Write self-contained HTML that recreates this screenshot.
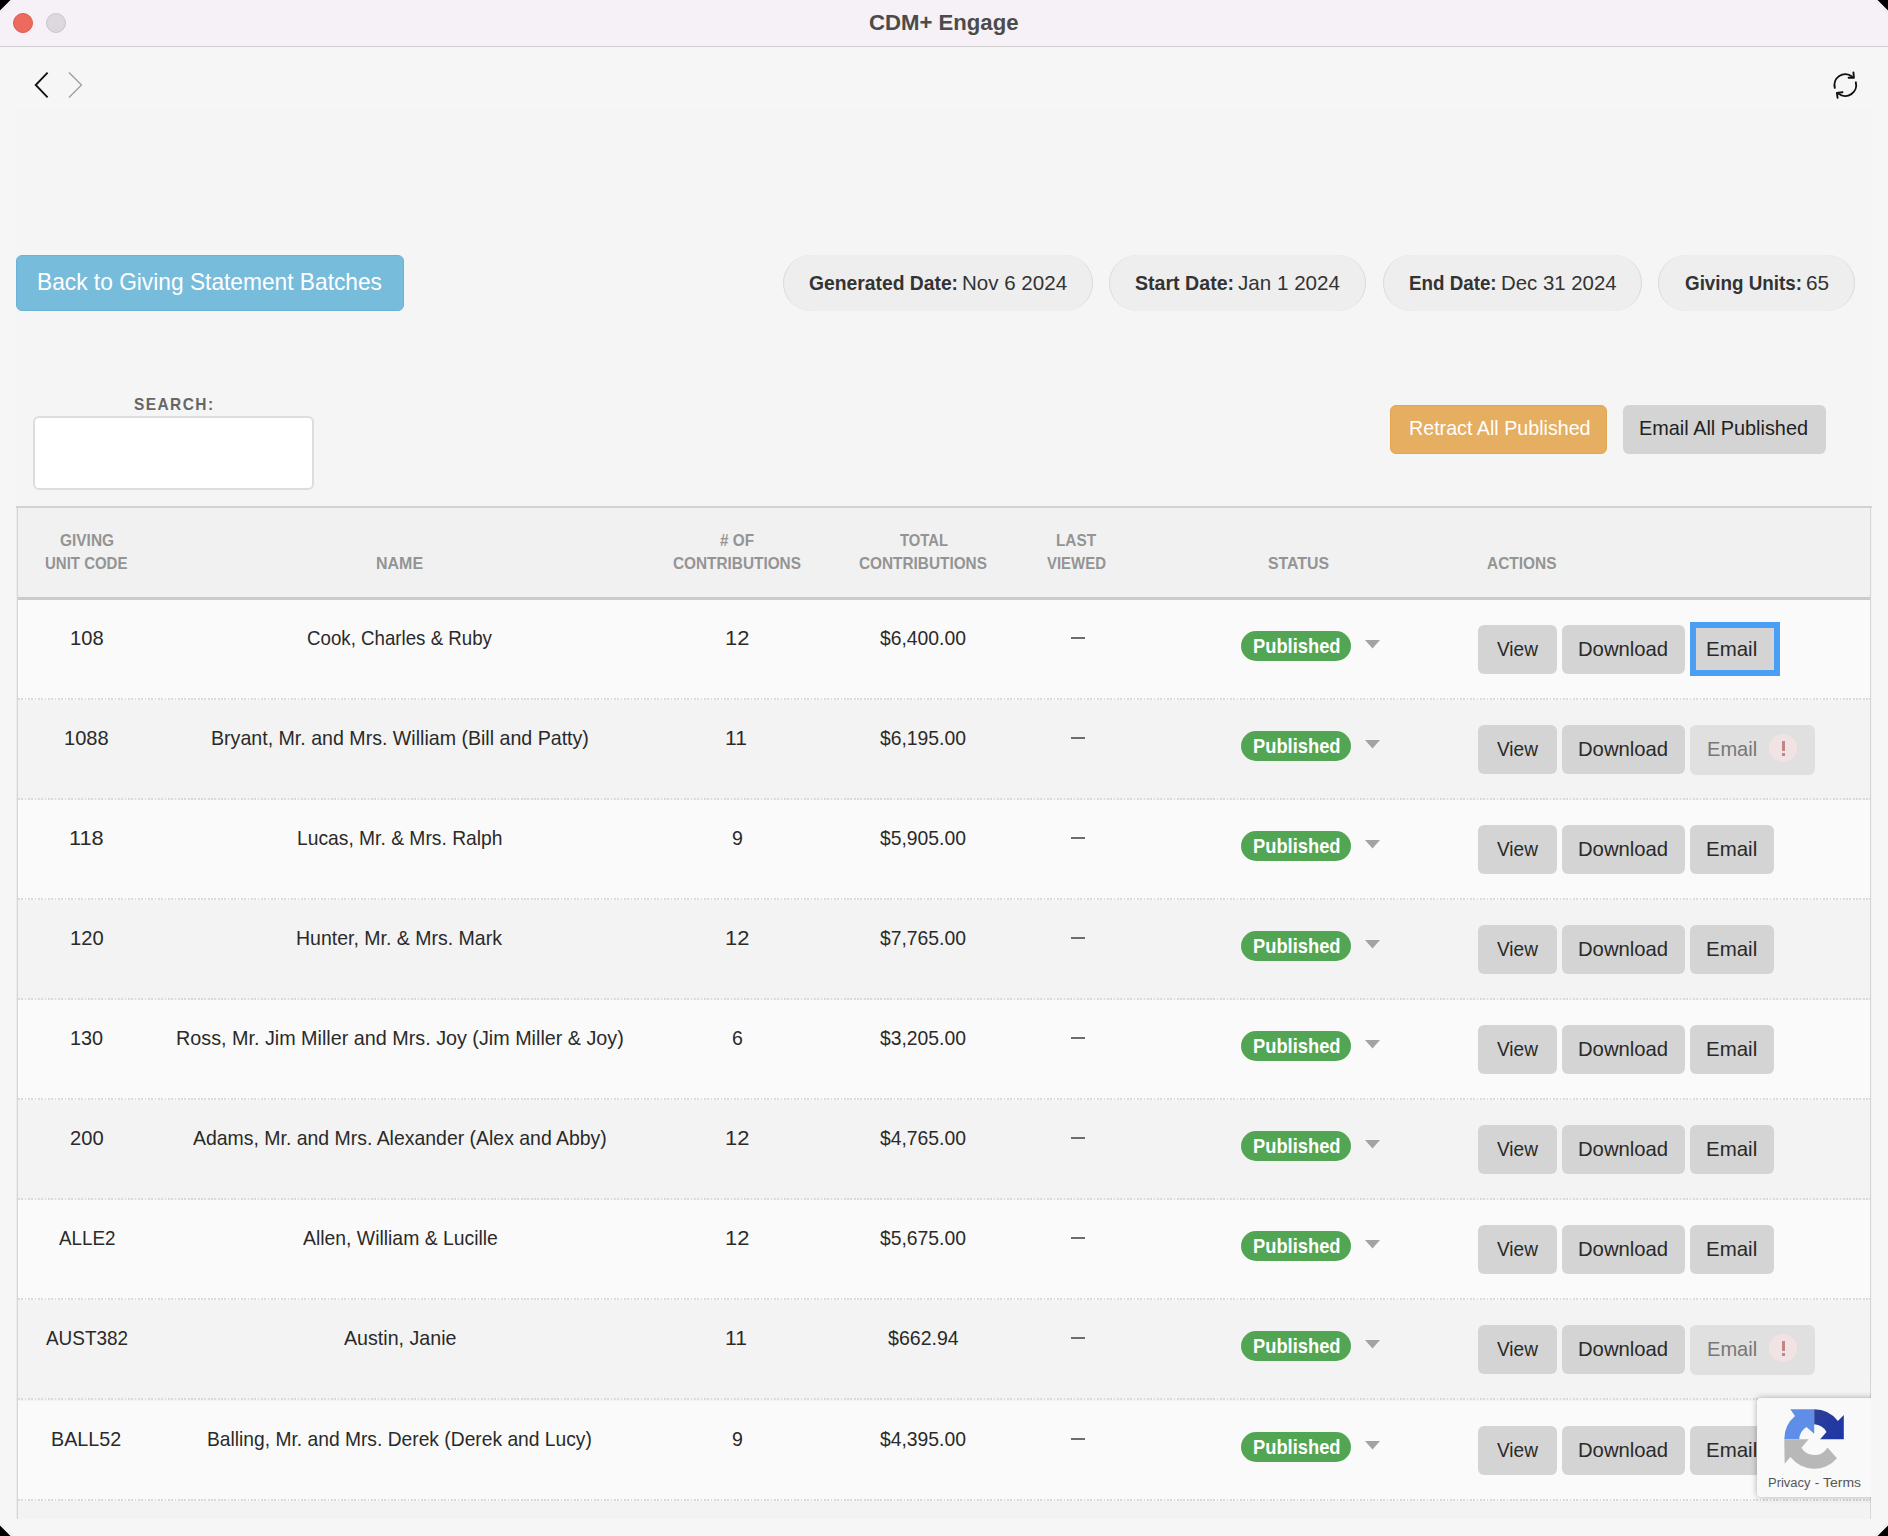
<!DOCTYPE html>
<html><head><meta charset="utf-8"><style>
html,body{margin:0;padding:0;width:1888px;height:1536px;overflow:hidden;background:#000}
body{position:relative;font-family:"Liberation Sans",sans-serif}
.b{position:absolute}
.t{position:absolute;white-space:nowrap;transform-origin:0 0}
</style></head><body>
<div class="b" style="left:0;top:0;width:1888px;height:1536px;background:#f6f6f6;overflow:hidden"><div class="b" style="left:16px;top:108px;width:1856px;height:1411px;background:#f5f5f5"></div><div class="b" style="left:0px;top:0px;width:1888px;height:46px;background:#f6f1f6"></div><div class="b" style="left:0px;top:46px;width:1888px;height:1px;background:#cfcdd0"></div></div><div class="b" style="left:13px;top:13px;width:20px;height:20px;background:#ec6a5e;border-radius:50%;border:1px solid #e0584c;box-sizing:border-box"></div><div class="b" style="left:45.5px;top:13px;width:20.0px;height:20px;background:#dcd8dd;border-radius:50%;border:1px solid #c9c5ca;box-sizing:border-box"></div><div class="t" style="left:869.00px;top:11.95px;font-size:21.8px;line-height:21.8px;color:#4b4b4b;font-weight:700;letter-spacing:0px;transform:scaleX(1.0161);">CDM+ Engage</div><svg class="b" style="left:30px;top:68px" width="60" height="34" viewBox="0 0 60 34"><polyline points="17.6,4.6 5.7,17 17.6,29.4" fill="none" stroke="#111" stroke-width="1.85"/><polyline points="39,4.5 51.5,17 39,29.5" fill="none" stroke="#9a9a9a" stroke-width="1.2"/></svg><svg class="b" style="left:1829px;top:69px" width="32" height="32" viewBox="0 0 32 32" fill="none" stroke="#111" stroke-width="1.9" stroke-linecap="round" stroke-linejoin="round">
<path d="M5.8 18.9 A10.9 10.9 0 0 1 22.9 7.4"/><path d="M19.6 8.7 L24.9 8.7 L24.4 3.4"/>
<path d="M26.8 13.3 A10.9 10.9 0 0 1 9.7 24.8"/><path d="M13.5 23.2 L7.9 23.9 L8.6 28.8"/>
</svg><div class="b" style="left:16px;top:255px;width:388px;height:56px;background:#78bcdc;border:1px solid #68b3d7;border-radius:6px;box-sizing:border-box"></div><div class="t" style="left:37.00px;top:270.38px;font-size:24px;line-height:24px;color:#ffffff;font-weight:400;letter-spacing:0px;transform:scaleX(0.9473);">Back to Giving Statement Batches</div><div class="b" style="left:783px;top:255px;width:310px;height:56px;background:#eeeeee;border-left:1.5px solid #d9d9d9;border-right:1.5px solid #d9d9d9;border-radius:28px;box-sizing:border-box"></div><div class="t" style="left:808.50px;top:272.42px;font-size:21px;line-height:21px;color:#333;font-weight:700;letter-spacing:0px;transform:scaleX(0.9188);">Generated Date:</div><div class="t" style="left:961.50px;top:272.42px;font-size:21px;line-height:21px;color:#333;font-weight:400;letter-spacing:0px;transform:scaleX(0.9781);">Nov 6 2024</div><div class="b" style="left:1109px;top:255px;width:257px;height:56px;background:#eeeeee;border-left:1.5px solid #d9d9d9;border-right:1.5px solid #d9d9d9;border-radius:28px;box-sizing:border-box"></div><div class="t" style="left:1134.50px;top:272.42px;font-size:21px;line-height:21px;color:#333;font-weight:700;letter-spacing:0px;transform:scaleX(0.9330);">Start Date:</div><div class="t" style="left:1237.50px;top:272.42px;font-size:21px;line-height:21px;color:#333;font-weight:400;letter-spacing:0px;transform:scaleX(0.9815);">Jan 1 2024</div><div class="b" style="left:1383px;top:255px;width:259px;height:56px;background:#eeeeee;border-left:1.5px solid #d9d9d9;border-right:1.5px solid #d9d9d9;border-radius:28px;box-sizing:border-box"></div><div class="t" style="left:1409.00px;top:272.42px;font-size:21px;line-height:21px;color:#333;font-weight:700;letter-spacing:0px;transform:scaleX(0.8937);">End Date:</div><div class="t" style="left:1501.00px;top:272.42px;font-size:21px;line-height:21px;color:#333;font-weight:400;letter-spacing:0px;transform:scaleX(0.9706);">Dec 31 2024</div><div class="b" style="left:1658px;top:255px;width:197px;height:56px;background:#eeeeee;border-left:1.5px solid #d9d9d9;border-right:1.5px solid #d9d9d9;border-radius:28px;box-sizing:border-box"></div><div class="t" style="left:1684.50px;top:272.42px;font-size:21px;line-height:21px;color:#333;font-weight:700;letter-spacing:0px;transform:scaleX(0.8958);">Giving Units:</div><div class="t" style="left:1806.00px;top:272.42px;font-size:21px;line-height:21px;color:#333;font-weight:400;letter-spacing:0px;transform:scaleX(0.9900);">65</div><div class="t" style="left:134.00px;top:396.41px;font-size:17.0px;line-height:17.0px;color:#666;font-weight:700;letter-spacing:1.6px;transform:scaleX(0.9087);">SEARCH:</div><div class="b" style="left:33px;top:416px;width:281px;height:74px;background:#fff;border:2px solid #dddddd;border-radius:6px;box-sizing:border-box"></div><div class="b" style="left:1390px;top:405px;width:217px;height:49px;background:#e5ae60;border:1px solid #e0a651;border-radius:6px;box-sizing:border-box"></div><div class="t" style="left:1408.50px;top:417.42px;font-size:21px;line-height:21px;color:#fff;font-weight:400;letter-spacing:0px;transform:scaleX(0.9369);">Retract All Published</div><div class="b" style="left:1623px;top:405px;width:203px;height:49px;background:#d4d4d4;border-radius:6px"></div><div class="t" style="left:1639.00px;top:417.42px;font-size:21px;line-height:21px;color:#222;font-weight:400;letter-spacing:0px;transform:scaleX(0.9465);">Email All Published</div><div class="b" style="left:16px;top:506px;width:1856px;height:2px;background:#d2d2d2"></div><div class="b" style="left:16px;top:508px;width:2px;height:1011px;background:linear-gradient(90deg,#ececec 0,#ececec 50%,#d6d6d6 50%)"></div><div class="b" style="left:1870px;top:508px;width:2px;height:1011px;background:linear-gradient(90deg,#d6d6d6 0,#d6d6d6 50%,#f2f2f2 50%)"></div><div class="b" style="left:18px;top:508px;width:1852px;height:1011px;background:#f3f3f3"></div><div class="b" style="left:18px;top:508px;width:1852px;height:89px;background:#f1f1f1"></div><div class="b" style="left:18px;top:597px;width:1852px;height:3px;background:#cbcbcb"></div><div class="t" style="left:59.50px;top:531.56px;font-size:17.3px;line-height:17.3px;color:#949494;font-weight:700;letter-spacing:0px;transform:scaleX(0.8933);">GIVING</div><div class="t" style="left:45.00px;top:554.56px;font-size:17.3px;line-height:17.3px;color:#949494;font-weight:700;letter-spacing:0px;transform:scaleX(0.8673);">UNIT CODE</div><div class="t" style="left:376.00px;top:554.56px;font-size:17.3px;line-height:17.3px;color:#949494;font-weight:700;letter-spacing:0px;transform:scaleX(0.9243);">NAME</div><div class="t" style="left:720.00px;top:531.56px;font-size:17.3px;line-height:17.3px;color:#949494;font-weight:700;letter-spacing:0px;transform:scaleX(0.8843);"># OF</div><div class="t" style="left:673.00px;top:554.56px;font-size:17.3px;line-height:17.3px;color:#949494;font-weight:700;letter-spacing:0px;transform:scaleX(0.8882);">CONTRIBUTIONS</div><div class="t" style="left:900.00px;top:531.56px;font-size:17.3px;line-height:17.3px;color:#949494;font-weight:700;letter-spacing:0px;transform:scaleX(0.8566);">TOTAL</div><div class="t" style="left:859.00px;top:554.56px;font-size:17.3px;line-height:17.3px;color:#949494;font-weight:700;letter-spacing:0px;transform:scaleX(0.8882);">CONTRIBUTIONS</div><div class="t" style="left:1056.00px;top:531.56px;font-size:17.3px;line-height:17.3px;color:#949494;font-weight:700;letter-spacing:0px;transform:scaleX(0.8865);">LAST</div><div class="t" style="left:1047.00px;top:554.56px;font-size:17.3px;line-height:17.3px;color:#949494;font-weight:700;letter-spacing:0px;transform:scaleX(0.8647);">VIEWED</div><div class="t" style="left:1268.00px;top:554.56px;font-size:17.3px;line-height:17.3px;color:#949494;font-weight:700;letter-spacing:0px;transform:scaleX(0.9163);">STATUS</div><div class="t" style="left:1486.50px;top:554.56px;font-size:17.3px;line-height:17.3px;color:#949494;font-weight:700;letter-spacing:0px;transform:scaleX(0.8929);">ACTIONS</div><div class="b" style="left:18px;top:600px;width:1852px;height:100px;background:#fafafa"></div><div class="b" style="left:18px;top:698px;width:1852px;height:2px;background:repeating-linear-gradient(90deg,#dadada 0,#dadada 1.7px,transparent 1.7px,transparent 3.33px)"></div><div class="t" style="left:69.50px;top:627.93px;font-size:20.4px;line-height:20.4px;color:#2a2a2a;font-weight:400;letter-spacing:0px;transform:scaleX(0.9882);">108</div><div class="t" style="left:307.00px;top:627.93px;font-size:20.4px;line-height:20.4px;color:#2a2a2a;font-weight:400;letter-spacing:0px;transform:scaleX(0.9168);">Cook, Charles &amp; Ruby</div><div class="t" style="left:724.50px;top:627.93px;font-size:20.4px;line-height:20.4px;color:#2a2a2a;font-weight:400;letter-spacing:0px;transform:scaleX(1.0739);">12</div><div class="t" style="left:880.00px;top:627.93px;font-size:20.4px;line-height:20.4px;color:#2a2a2a;font-weight:400;letter-spacing:0px;transform:scaleX(0.9479);">$6,400.00</div><div class="b" style="left:1071px;top:637.1px;width:14px;height:2px;background:#6c6c6c"></div><div class="b" style="left:1241px;top:631px;width:110px;height:30px;background:#52a552;border-radius:15px"></div><div class="t" style="left:1252.50px;top:635.79px;font-size:20.8px;line-height:20.8px;color:#fff;font-weight:700;letter-spacing:0px;transform:scaleX(0.8812);">Published</div><svg class="b" style="left:1365px;top:640px" width="15" height="9" viewBox="0 0 15 9"><polygon points="0,0 15,0 7.5,8.5" fill="#a3a3a3"/></svg><div class="b" style="left:1478px;top:625px;width:79px;height:49px;background:#d4d4d4;border-radius:6px"></div><div class="t" style="left:1497.00px;top:638.93px;font-size:20.4px;line-height:20.4px;color:#2a2a2a;font-weight:400;letter-spacing:0px;transform:scaleX(0.9337);">View</div><div class="b" style="left:1562px;top:625px;width:123px;height:49px;background:#d4d4d4;border-radius:6px"></div><div class="t" style="left:1578.00px;top:638.93px;font-size:20.4px;line-height:20.4px;color:#2a2a2a;font-weight:400;letter-spacing:0px;transform:scaleX(0.9931);">Download</div><div class="b" style="left:1690px;top:622px;width:90px;height:54px;border:6px solid #4a9ff5;box-sizing:border-box;background:#d4d4d4"></div><div class="t" style="left:1705.50px;top:638.93px;font-size:20.4px;line-height:20.4px;color:#2a2a2a;font-weight:400;letter-spacing:0px;transform:scaleX(1.0039);">Email</div><div class="b" style="left:18px;top:700px;width:1852px;height:100px;background:#f3f3f3"></div><div class="b" style="left:18px;top:798px;width:1852px;height:2px;background:repeating-linear-gradient(90deg,#dadada 0,#dadada 1.7px,transparent 1.7px,transparent 3.33px)"></div><div class="t" style="left:64.00px;top:727.93px;font-size:20.4px;line-height:20.4px;color:#2a2a2a;font-weight:400;letter-spacing:0px;transform:scaleX(0.9832);">1088</div><div class="t" style="left:211.00px;top:727.93px;font-size:20.4px;line-height:20.4px;color:#2a2a2a;font-weight:400;letter-spacing:0px;transform:scaleX(0.9610);">Bryant, Mr. and Mrs. William (Bill and Patty)</div><div class="t" style="left:724.50px;top:727.93px;font-size:20.4px;line-height:20.4px;color:#2a2a2a;font-weight:400;letter-spacing:0px;transform:scaleX(1.0308);">11</div><div class="t" style="left:880.00px;top:727.93px;font-size:20.4px;line-height:20.4px;color:#2a2a2a;font-weight:400;letter-spacing:0px;transform:scaleX(0.9479);">$6,195.00</div><div class="b" style="left:1071px;top:737.1px;width:14px;height:2px;background:#6c6c6c"></div><div class="b" style="left:1241px;top:731px;width:110px;height:30px;background:#52a552;border-radius:15px"></div><div class="t" style="left:1252.50px;top:735.79px;font-size:20.8px;line-height:20.8px;color:#fff;font-weight:700;letter-spacing:0px;transform:scaleX(0.8812);">Published</div><svg class="b" style="left:1365px;top:740px" width="15" height="9" viewBox="0 0 15 9"><polygon points="0,0 15,0 7.5,8.5" fill="#a3a3a3"/></svg><div class="b" style="left:1478px;top:725px;width:79px;height:49px;background:#d4d4d4;border-radius:6px"></div><div class="t" style="left:1497.00px;top:738.93px;font-size:20.4px;line-height:20.4px;color:#2a2a2a;font-weight:400;letter-spacing:0px;transform:scaleX(0.9337);">View</div><div class="b" style="left:1562px;top:725px;width:123px;height:49px;background:#d4d4d4;border-radius:6px"></div><div class="t" style="left:1578.00px;top:738.93px;font-size:20.4px;line-height:20.4px;color:#2a2a2a;font-weight:400;letter-spacing:0px;transform:scaleX(0.9931);">Download</div><div class="b" style="left:1690px;top:725px;width:125px;height:50px;background:#e0e0e0;border-radius:6px"></div><div class="t" style="left:1707.00px;top:738.93px;font-size:20.4px;line-height:20.4px;color:#777;font-weight:400;letter-spacing:0px;transform:scaleX(0.9847);">Email</div><div class="b" style="left:1769px;top:734px;width:28px;height:28px;background:#f1e3e3;border-radius:50%"></div><div class="b" style="left:1782px;top:741px;width:3px;height:10px;background:#c08585"></div><div class="b" style="left:1782px;top:753px;width:3px;height:3px;background:#c08585"></div><div class="b" style="left:18px;top:800px;width:1852px;height:100px;background:#fafafa"></div><div class="b" style="left:18px;top:898px;width:1852px;height:2px;background:repeating-linear-gradient(90deg,#dadada 0,#dadada 1.7px,transparent 1.7px,transparent 3.33px)"></div><div class="t" style="left:68.50px;top:827.93px;font-size:20.4px;line-height:20.4px;color:#2a2a2a;font-weight:400;letter-spacing:0px;transform:scaleX(1.0676);">118</div><div class="t" style="left:297.00px;top:827.93px;font-size:20.4px;line-height:20.4px;color:#2a2a2a;font-weight:400;letter-spacing:0px;transform:scaleX(0.9443);">Lucas, Mr. &amp; Mrs. Ralph</div><div class="t" style="left:731.57px;top:827.93px;font-size:20.4px;line-height:20.4px;color:#2a2a2a;font-weight:400;letter-spacing:0px;transform:scaleX(0.9600);">9</div><div class="t" style="left:880.00px;top:827.93px;font-size:20.4px;line-height:20.4px;color:#2a2a2a;font-weight:400;letter-spacing:0px;transform:scaleX(0.9479);">$5,905.00</div><div class="b" style="left:1071px;top:837.1px;width:14px;height:2px;background:#6c6c6c"></div><div class="b" style="left:1241px;top:831px;width:110px;height:30px;background:#52a552;border-radius:15px"></div><div class="t" style="left:1252.50px;top:835.79px;font-size:20.8px;line-height:20.8px;color:#fff;font-weight:700;letter-spacing:0px;transform:scaleX(0.8812);">Published</div><svg class="b" style="left:1365px;top:840px" width="15" height="9" viewBox="0 0 15 9"><polygon points="0,0 15,0 7.5,8.5" fill="#a3a3a3"/></svg><div class="b" style="left:1478px;top:825px;width:79px;height:49px;background:#d4d4d4;border-radius:6px"></div><div class="t" style="left:1497.00px;top:838.93px;font-size:20.4px;line-height:20.4px;color:#2a2a2a;font-weight:400;letter-spacing:0px;transform:scaleX(0.9337);">View</div><div class="b" style="left:1562px;top:825px;width:123px;height:49px;background:#d4d4d4;border-radius:6px"></div><div class="t" style="left:1578.00px;top:838.93px;font-size:20.4px;line-height:20.4px;color:#2a2a2a;font-weight:400;letter-spacing:0px;transform:scaleX(0.9931);">Download</div><div class="b" style="left:1690px;top:825px;width:84px;height:49px;background:#d4d4d4;border-radius:6px"></div><div class="t" style="left:1705.50px;top:838.93px;font-size:20.4px;line-height:20.4px;color:#2a2a2a;font-weight:400;letter-spacing:0px;transform:scaleX(1.0039);">Email</div><div class="b" style="left:18px;top:900px;width:1852px;height:100px;background:#f3f3f3"></div><div class="b" style="left:18px;top:998px;width:1852px;height:2px;background:repeating-linear-gradient(90deg,#dadada 0,#dadada 1.7px,transparent 1.7px,transparent 3.33px)"></div><div class="t" style="left:69.50px;top:927.93px;font-size:20.4px;line-height:20.4px;color:#2a2a2a;font-weight:400;letter-spacing:0px;transform:scaleX(0.9882);">120</div><div class="t" style="left:296.00px;top:927.93px;font-size:20.4px;line-height:20.4px;color:#2a2a2a;font-weight:400;letter-spacing:0px;transform:scaleX(0.9564);">Hunter, Mr. &amp; Mrs. Mark</div><div class="t" style="left:724.50px;top:927.93px;font-size:20.4px;line-height:20.4px;color:#2a2a2a;font-weight:400;letter-spacing:0px;transform:scaleX(1.0739);">12</div><div class="t" style="left:880.00px;top:927.93px;font-size:20.4px;line-height:20.4px;color:#2a2a2a;font-weight:400;letter-spacing:0px;transform:scaleX(0.9479);">$7,765.00</div><div class="b" style="left:1071px;top:937.1px;width:14px;height:2px;background:#6c6c6c"></div><div class="b" style="left:1241px;top:931px;width:110px;height:30px;background:#52a552;border-radius:15px"></div><div class="t" style="left:1252.50px;top:935.79px;font-size:20.8px;line-height:20.8px;color:#fff;font-weight:700;letter-spacing:0px;transform:scaleX(0.8812);">Published</div><svg class="b" style="left:1365px;top:940px" width="15" height="9" viewBox="0 0 15 9"><polygon points="0,0 15,0 7.5,8.5" fill="#a3a3a3"/></svg><div class="b" style="left:1478px;top:925px;width:79px;height:49px;background:#d4d4d4;border-radius:6px"></div><div class="t" style="left:1497.00px;top:938.93px;font-size:20.4px;line-height:20.4px;color:#2a2a2a;font-weight:400;letter-spacing:0px;transform:scaleX(0.9337);">View</div><div class="b" style="left:1562px;top:925px;width:123px;height:49px;background:#d4d4d4;border-radius:6px"></div><div class="t" style="left:1578.00px;top:938.93px;font-size:20.4px;line-height:20.4px;color:#2a2a2a;font-weight:400;letter-spacing:0px;transform:scaleX(0.9931);">Download</div><div class="b" style="left:1690px;top:925px;width:84px;height:49px;background:#d4d4d4;border-radius:6px"></div><div class="t" style="left:1705.50px;top:938.93px;font-size:20.4px;line-height:20.4px;color:#2a2a2a;font-weight:400;letter-spacing:0px;transform:scaleX(1.0039);">Email</div><div class="b" style="left:18px;top:1000px;width:1852px;height:100px;background:#fafafa"></div><div class="b" style="left:18px;top:1098px;width:1852px;height:2px;background:repeating-linear-gradient(90deg,#dadada 0,#dadada 1.7px,transparent 1.7px,transparent 3.33px)"></div><div class="t" style="left:70.00px;top:1027.93px;font-size:20.4px;line-height:20.4px;color:#2a2a2a;font-weight:400;letter-spacing:0px;transform:scaleX(0.9746);">130</div><div class="t" style="left:175.50px;top:1027.93px;font-size:20.4px;line-height:20.4px;color:#2a2a2a;font-weight:400;letter-spacing:0px;transform:scaleX(0.9688);">Ross, Mr. Jim Miller and Mrs. Joy (Jim Miller &amp; Joy)</div><div class="t" style="left:731.57px;top:1027.93px;font-size:20.4px;line-height:20.4px;color:#2a2a2a;font-weight:400;letter-spacing:0px;transform:scaleX(0.9600);">6</div><div class="t" style="left:880.00px;top:1027.93px;font-size:20.4px;line-height:20.4px;color:#2a2a2a;font-weight:400;letter-spacing:0px;transform:scaleX(0.9479);">$3,205.00</div><div class="b" style="left:1071px;top:1037.1px;width:14px;height:2px;background:#6c6c6c"></div><div class="b" style="left:1241px;top:1031px;width:110px;height:30px;background:#52a552;border-radius:15px"></div><div class="t" style="left:1252.50px;top:1035.79px;font-size:20.8px;line-height:20.8px;color:#fff;font-weight:700;letter-spacing:0px;transform:scaleX(0.8812);">Published</div><svg class="b" style="left:1365px;top:1040px" width="15" height="9" viewBox="0 0 15 9"><polygon points="0,0 15,0 7.5,8.5" fill="#a3a3a3"/></svg><div class="b" style="left:1478px;top:1025px;width:79px;height:49px;background:#d4d4d4;border-radius:6px"></div><div class="t" style="left:1497.00px;top:1038.93px;font-size:20.4px;line-height:20.4px;color:#2a2a2a;font-weight:400;letter-spacing:0px;transform:scaleX(0.9337);">View</div><div class="b" style="left:1562px;top:1025px;width:123px;height:49px;background:#d4d4d4;border-radius:6px"></div><div class="t" style="left:1578.00px;top:1038.93px;font-size:20.4px;line-height:20.4px;color:#2a2a2a;font-weight:400;letter-spacing:0px;transform:scaleX(0.9931);">Download</div><div class="b" style="left:1690px;top:1025px;width:84px;height:49px;background:#d4d4d4;border-radius:6px"></div><div class="t" style="left:1705.50px;top:1038.93px;font-size:20.4px;line-height:20.4px;color:#2a2a2a;font-weight:400;letter-spacing:0px;transform:scaleX(1.0039);">Email</div><div class="b" style="left:18px;top:1100px;width:1852px;height:100px;background:#f3f3f3"></div><div class="b" style="left:18px;top:1198px;width:1852px;height:2px;background:repeating-linear-gradient(90deg,#dadada 0,#dadada 1.7px,transparent 1.7px,transparent 3.33px)"></div><div class="t" style="left:69.50px;top:1127.93px;font-size:20.4px;line-height:20.4px;color:#2a2a2a;font-weight:400;letter-spacing:0px;transform:scaleX(0.9883);">200</div><div class="t" style="left:193.00px;top:1127.93px;font-size:20.4px;line-height:20.4px;color:#2a2a2a;font-weight:400;letter-spacing:0px;transform:scaleX(0.9533);">Adams, Mr. and Mrs. Alexander (Alex and Abby)</div><div class="t" style="left:724.50px;top:1127.93px;font-size:20.4px;line-height:20.4px;color:#2a2a2a;font-weight:400;letter-spacing:0px;transform:scaleX(1.0739);">12</div><div class="t" style="left:880.00px;top:1127.93px;font-size:20.4px;line-height:20.4px;color:#2a2a2a;font-weight:400;letter-spacing:0px;transform:scaleX(0.9479);">$4,765.00</div><div class="b" style="left:1071px;top:1137.1px;width:14px;height:2px;background:#6c6c6c"></div><div class="b" style="left:1241px;top:1131px;width:110px;height:30px;background:#52a552;border-radius:15px"></div><div class="t" style="left:1252.50px;top:1135.79px;font-size:20.8px;line-height:20.8px;color:#fff;font-weight:700;letter-spacing:0px;transform:scaleX(0.8812);">Published</div><svg class="b" style="left:1365px;top:1140px" width="15" height="9" viewBox="0 0 15 9"><polygon points="0,0 15,0 7.5,8.5" fill="#a3a3a3"/></svg><div class="b" style="left:1478px;top:1125px;width:79px;height:49px;background:#d4d4d4;border-radius:6px"></div><div class="t" style="left:1497.00px;top:1138.93px;font-size:20.4px;line-height:20.4px;color:#2a2a2a;font-weight:400;letter-spacing:0px;transform:scaleX(0.9337);">View</div><div class="b" style="left:1562px;top:1125px;width:123px;height:49px;background:#d4d4d4;border-radius:6px"></div><div class="t" style="left:1578.00px;top:1138.93px;font-size:20.4px;line-height:20.4px;color:#2a2a2a;font-weight:400;letter-spacing:0px;transform:scaleX(0.9931);">Download</div><div class="b" style="left:1690px;top:1125px;width:84px;height:49px;background:#d4d4d4;border-radius:6px"></div><div class="t" style="left:1705.50px;top:1138.93px;font-size:20.4px;line-height:20.4px;color:#2a2a2a;font-weight:400;letter-spacing:0px;transform:scaleX(1.0039);">Email</div><div class="b" style="left:18px;top:1200px;width:1852px;height:100px;background:#fafafa"></div><div class="b" style="left:18px;top:1298px;width:1852px;height:2px;background:repeating-linear-gradient(90deg,#dadada 0,#dadada 1.7px,transparent 1.7px,transparent 3.33px)"></div><div class="t" style="left:58.50px;top:1227.93px;font-size:20.4px;line-height:20.4px;color:#2a2a2a;font-weight:400;letter-spacing:0px;transform:scaleX(0.9230);">ALLE2</div><div class="t" style="left:302.50px;top:1227.93px;font-size:20.4px;line-height:20.4px;color:#2a2a2a;font-weight:400;letter-spacing:0px;transform:scaleX(0.9502);">Allen, William &amp; Lucille</div><div class="t" style="left:724.50px;top:1227.93px;font-size:20.4px;line-height:20.4px;color:#2a2a2a;font-weight:400;letter-spacing:0px;transform:scaleX(1.0739);">12</div><div class="t" style="left:880.00px;top:1227.93px;font-size:20.4px;line-height:20.4px;color:#2a2a2a;font-weight:400;letter-spacing:0px;transform:scaleX(0.9479);">$5,675.00</div><div class="b" style="left:1071px;top:1237.1px;width:14px;height:2px;background:#6c6c6c"></div><div class="b" style="left:1241px;top:1231px;width:110px;height:30px;background:#52a552;border-radius:15px"></div><div class="t" style="left:1252.50px;top:1235.79px;font-size:20.8px;line-height:20.8px;color:#fff;font-weight:700;letter-spacing:0px;transform:scaleX(0.8812);">Published</div><svg class="b" style="left:1365px;top:1240px" width="15" height="9" viewBox="0 0 15 9"><polygon points="0,0 15,0 7.5,8.5" fill="#a3a3a3"/></svg><div class="b" style="left:1478px;top:1225px;width:79px;height:49px;background:#d4d4d4;border-radius:6px"></div><div class="t" style="left:1497.00px;top:1238.93px;font-size:20.4px;line-height:20.4px;color:#2a2a2a;font-weight:400;letter-spacing:0px;transform:scaleX(0.9337);">View</div><div class="b" style="left:1562px;top:1225px;width:123px;height:49px;background:#d4d4d4;border-radius:6px"></div><div class="t" style="left:1578.00px;top:1238.93px;font-size:20.4px;line-height:20.4px;color:#2a2a2a;font-weight:400;letter-spacing:0px;transform:scaleX(0.9931);">Download</div><div class="b" style="left:1690px;top:1225px;width:84px;height:49px;background:#d4d4d4;border-radius:6px"></div><div class="t" style="left:1705.50px;top:1238.93px;font-size:20.4px;line-height:20.4px;color:#2a2a2a;font-weight:400;letter-spacing:0px;transform:scaleX(1.0039);">Email</div><div class="b" style="left:18px;top:1300px;width:1852px;height:100px;background:#f3f3f3"></div><div class="b" style="left:18px;top:1398px;width:1852px;height:2px;background:repeating-linear-gradient(90deg,#dadada 0,#dadada 1.7px,transparent 1.7px,transparent 3.33px)"></div><div class="t" style="left:46.00px;top:1327.93px;font-size:20.4px;line-height:20.4px;color:#2a2a2a;font-weight:400;letter-spacing:0px;transform:scaleX(0.9274);">AUST382</div><div class="t" style="left:344.00px;top:1327.93px;font-size:20.4px;line-height:20.4px;color:#2a2a2a;font-weight:400;letter-spacing:0px;transform:scaleX(0.9633);">Austin, Janie</div><div class="t" style="left:724.50px;top:1327.93px;font-size:20.4px;line-height:20.4px;color:#2a2a2a;font-weight:400;letter-spacing:0px;transform:scaleX(1.0308);">11</div><div class="t" style="left:887.90px;top:1327.93px;font-size:20.4px;line-height:20.4px;color:#2a2a2a;font-weight:400;letter-spacing:0px;transform:scaleX(0.9600);">$662.94</div><div class="b" style="left:1071px;top:1337.1px;width:14px;height:2px;background:#6c6c6c"></div><div class="b" style="left:1241px;top:1331px;width:110px;height:30px;background:#52a552;border-radius:15px"></div><div class="t" style="left:1252.50px;top:1335.79px;font-size:20.8px;line-height:20.8px;color:#fff;font-weight:700;letter-spacing:0px;transform:scaleX(0.8812);">Published</div><svg class="b" style="left:1365px;top:1340px" width="15" height="9" viewBox="0 0 15 9"><polygon points="0,0 15,0 7.5,8.5" fill="#a3a3a3"/></svg><div class="b" style="left:1478px;top:1325px;width:79px;height:49px;background:#d4d4d4;border-radius:6px"></div><div class="t" style="left:1497.00px;top:1338.93px;font-size:20.4px;line-height:20.4px;color:#2a2a2a;font-weight:400;letter-spacing:0px;transform:scaleX(0.9337);">View</div><div class="b" style="left:1562px;top:1325px;width:123px;height:49px;background:#d4d4d4;border-radius:6px"></div><div class="t" style="left:1578.00px;top:1338.93px;font-size:20.4px;line-height:20.4px;color:#2a2a2a;font-weight:400;letter-spacing:0px;transform:scaleX(0.9931);">Download</div><div class="b" style="left:1690px;top:1325px;width:125px;height:50px;background:#e0e0e0;border-radius:6px"></div><div class="t" style="left:1707.00px;top:1338.93px;font-size:20.4px;line-height:20.4px;color:#777;font-weight:400;letter-spacing:0px;transform:scaleX(0.9847);">Email</div><div class="b" style="left:1769px;top:1334px;width:28px;height:28px;background:#f1e3e3;border-radius:50%"></div><div class="b" style="left:1782px;top:1341px;width:3px;height:10px;background:#c08585"></div><div class="b" style="left:1782px;top:1353px;width:3px;height:3px;background:#c08585"></div><div class="b" style="left:18px;top:1401px;width:1852px;height:100px;background:#fafafa"></div><div class="b" style="left:18px;top:1499px;width:1852px;height:2px;background:repeating-linear-gradient(90deg,#dadada 0,#dadada 1.7px,transparent 1.7px,transparent 3.33px)"></div><div class="t" style="left:50.50px;top:1428.93px;font-size:20.4px;line-height:20.4px;color:#2a2a2a;font-weight:400;letter-spacing:0px;transform:scaleX(0.9666);">BALL52</div><div class="t" style="left:206.50px;top:1428.93px;font-size:20.4px;line-height:20.4px;color:#2a2a2a;font-weight:400;letter-spacing:0px;transform:scaleX(0.9434);">Balling, Mr. and Mrs. Derek (Derek and Lucy)</div><div class="t" style="left:731.57px;top:1428.93px;font-size:20.4px;line-height:20.4px;color:#2a2a2a;font-weight:400;letter-spacing:0px;transform:scaleX(0.9600);">9</div><div class="t" style="left:880.00px;top:1428.93px;font-size:20.4px;line-height:20.4px;color:#2a2a2a;font-weight:400;letter-spacing:0px;transform:scaleX(0.9479);">$4,395.00</div><div class="b" style="left:1071px;top:1438.1px;width:14px;height:2px;background:#6c6c6c"></div><div class="b" style="left:1241px;top:1432px;width:110px;height:30px;background:#52a552;border-radius:15px"></div><div class="t" style="left:1252.50px;top:1436.79px;font-size:20.8px;line-height:20.8px;color:#fff;font-weight:700;letter-spacing:0px;transform:scaleX(0.8812);">Published</div><svg class="b" style="left:1365px;top:1441px" width="15" height="9" viewBox="0 0 15 9"><polygon points="0,0 15,0 7.5,8.5" fill="#a3a3a3"/></svg><div class="b" style="left:1478px;top:1426px;width:79px;height:49px;background:#d4d4d4;border-radius:6px"></div><div class="t" style="left:1497.00px;top:1439.93px;font-size:20.4px;line-height:20.4px;color:#2a2a2a;font-weight:400;letter-spacing:0px;transform:scaleX(0.9337);">View</div><div class="b" style="left:1562px;top:1426px;width:123px;height:49px;background:#d4d4d4;border-radius:6px"></div><div class="t" style="left:1578.00px;top:1439.93px;font-size:20.4px;line-height:20.4px;color:#2a2a2a;font-weight:400;letter-spacing:0px;transform:scaleX(0.9931);">Download</div><div class="b" style="left:1690px;top:1426px;width:84px;height:49px;background:#d4d4d4;border-radius:6px"></div><div class="t" style="left:1705.50px;top:1439.93px;font-size:20.4px;line-height:20.4px;color:#2a2a2a;font-weight:400;letter-spacing:0px;transform:scaleX(1.0039);">Email</div><div class="b" style="left:1870px;top:1380px;width:1px;height:139px;background:#d6d6d6"></div><div class="b" style="left:1757px;top:1398px;width:130px;height:99px;background:#f9f9f9;border-radius:4px 0 0 4px;box-shadow:0 0 6px rgba(0,0,0,0.32)"></div><svg class="b" style="left:1780px;top:1405px" width="70" height="70" viewBox="0 0 70 70">
<defs><linearGradient id="db" x1="0" y1="0" x2="1" y2="1"><stop offset="0" stop-color="#2c4096"/><stop offset="1" stop-color="#1f35a8"/></linearGradient></defs>
<path d="M4.3 34.2 A30 30 0 0 1 15 11 L10.3 4.3 L34.2 4.3 L34.2 28.7 L26.4 21.9 A15 15 0 0 0 19.3 34.2 Z" fill="#5f8ee8"/>
<path d="M34.2 4.3 A30 30 0 0 1 57.9 16 L63.8 10 L63.8 34.2 L40.1 34.2 L46.5 26.9 A15 15 0 0 0 34.2 19.2 Z" fill="url(#db)"/>
<path d="M4.3 34.2 L28.7 34.2 L21.4 42.8 A15 15 0 0 0 47.4 42.4 L57 53.3 A30 30 0 0 1 10.5 52 L4.6 58.8 Z" fill="#b8b8b8"/>
</svg><div class="t" style="left:1767.50px;top:1476.20px;font-size:13.7px;line-height:13.7px;color:#555;font-weight:400;letter-spacing:0px;transform:scaleX(0.9476);">Privacy</div><div class="t" style="left:1814.72px;top:1476.20px;font-size:13.7px;line-height:13.7px;color:#555;font-weight:400;letter-spacing:0px;transform:scaleX(1.0000);">-</div><div class="t" style="left:1823.00px;top:1476.20px;font-size:13.7px;line-height:13.7px;color:#555;font-weight:400;letter-spacing:0px;transform:scaleX(1.0193);">Terms</div><div class="b" style="left:1871px;top:1380px;width:17px;height:139px;background:#f6f6f6"></div><svg class="b" style="left:0;top:0" width="1888" height="1536" viewBox="0 0 1888 1536"><polygon points="0,0 10.5,0 0,10.5" fill="#000"/><polygon points="1888,0 1877.5,0 1888,10.5" fill="#000"/><polygon points="0,1536 10.5,1536 0,1525.5" fill="#000"/><polygon points="1888,1536 1877.5,1536 1888,1525.5" fill="#000"/></svg>
</body></html>
